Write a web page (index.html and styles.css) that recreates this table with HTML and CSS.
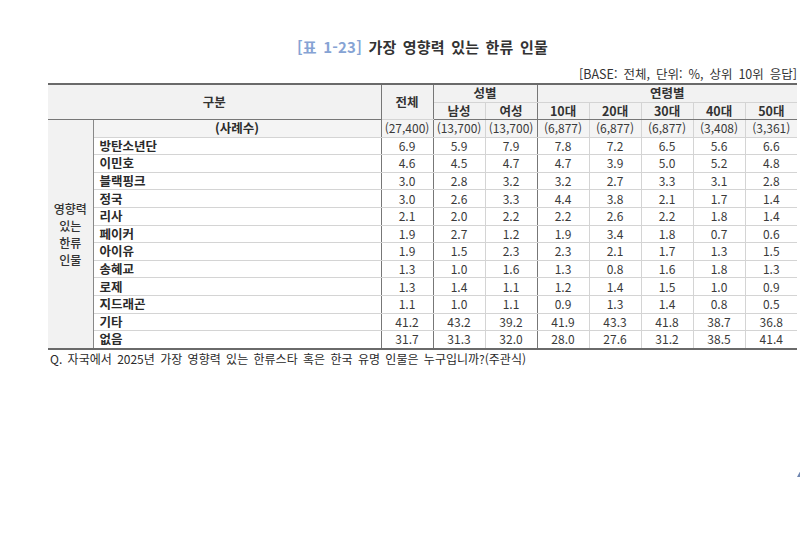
FILE: index.html
```html
<!DOCTYPE html>
<html lang="ko">
<head>
<meta charset="utf-8">
<link rel="stylesheet" href="styles.css">
</head>
<body>
<div class="page">
  <h1 class="title"><span class="tag">[표 1-23]</span> 가장 영향력 있는 한류 인물</h1>
  <div class="base">[BASE: 전체, 단위: %, 상위 10위 응답]</div>
  <table class="tbl">
    <colgroup>
      <col class="c-cat"><col class="c-label">
      <col class="c-num"><col class="c-num"><col class="c-num"><col class="c-num"><col class="c-num"><col class="c-num"><col class="c-num"><col class="c-num">
    </colgroup>
    <thead>
      <tr class="h1">
        <th colspan="2" rowspan="2" class="gubun thick-r">구분</th>
        <th rowspan="2" class="thick-r">전체</th>
        <th colspan="2" class="thick-r">성별</th>
        <th colspan="5">연령별</th>
      </tr>
      <tr class="h2">
        <th>남성</th><th class="thick-r">여성</th>
        <th>10대</th><th>20대</th><th>30대</th><th>40대</th><th>50대</th>
      </tr>
    </thead>
    <tbody>
      <tr class="cases">
        <td rowspan="13" class="cat">영향력<br>있는<br>한류<br>인물</td>
        <td class="label center thick-r">(사례수)</td>
        <td class="thick-r">(27,400)</td><td>(13,700)</td><td class="thick-r">(13,700)</td>
        <td>(6,877)</td><td>(6,877)</td><td>(6,877)</td><td>(3,408)</td><td>(3,361)</td>
      </tr>
      <tr><td class="label thick-r">방탄소년단</td><td class="thick-r">6.9</td><td>5.9</td><td class="thick-r">7.9</td><td>7.8</td><td>7.2</td><td>6.5</td><td>5.6</td><td>6.6</td></tr>
      <tr><td class="label thick-r">이민호</td><td class="thick-r">4.6</td><td>4.5</td><td class="thick-r">4.7</td><td>4.7</td><td>3.9</td><td>5.0</td><td>5.2</td><td>4.8</td></tr>
      <tr><td class="label thick-r">블랙핑크</td><td class="thick-r">3.0</td><td>2.8</td><td class="thick-r">3.2</td><td>3.2</td><td>2.7</td><td>3.3</td><td>3.1</td><td>2.8</td></tr>
      <tr><td class="label thick-r">정국</td><td class="thick-r">3.0</td><td>2.6</td><td class="thick-r">3.3</td><td>4.4</td><td>3.8</td><td>2.1</td><td>1.7</td><td>1.4</td></tr>
      <tr><td class="label thick-r">리사</td><td class="thick-r">2.1</td><td>2.0</td><td class="thick-r">2.2</td><td>2.2</td><td>2.6</td><td>2.2</td><td>1.8</td><td>1.4</td></tr>
      <tr><td class="label thick-r">페이커</td><td class="thick-r">1.9</td><td>2.7</td><td class="thick-r">1.2</td><td>1.9</td><td>3.4</td><td>1.8</td><td>0.7</td><td>0.6</td></tr>
      <tr><td class="label thick-r">아이유</td><td class="thick-r">1.9</td><td>1.5</td><td class="thick-r">2.3</td><td>2.3</td><td>2.1</td><td>1.7</td><td>1.3</td><td>1.5</td></tr>
      <tr><td class="label thick-r">송혜교</td><td class="thick-r">1.3</td><td>1.0</td><td class="thick-r">1.6</td><td>1.3</td><td>0.8</td><td>1.6</td><td>1.8</td><td>1.3</td></tr>
      <tr><td class="label thick-r">로제</td><td class="thick-r">1.3</td><td>1.4</td><td class="thick-r">1.1</td><td>1.2</td><td>1.4</td><td>1.5</td><td>1.0</td><td>0.9</td></tr>
      <tr><td class="label thick-r">지드래곤</td><td class="thick-r">1.1</td><td>1.0</td><td class="thick-r">1.1</td><td>0.9</td><td>1.3</td><td>1.4</td><td>0.8</td><td>0.5</td></tr>
      <tr><td class="label thick-r">기타</td><td class="thick-r">41.2</td><td>43.2</td><td class="thick-r">39.2</td><td>41.9</td><td>43.3</td><td>41.8</td><td>38.7</td><td>36.8</td></tr>
      <tr class="last"><td class="label thick-r">없음</td><td class="thick-r">31.7</td><td>31.3</td><td class="thick-r">32.0</td><td>28.0</td><td>27.6</td><td>31.2</td><td>38.5</td><td>41.4</td></tr>
    </tbody>
  </table>
  <p class="note">Q. 자국에서 2025년 가장 영향력 있는 한류스타 혹은 한국 유명 인물은 누구입니까?(주관식)</p>
  <span class="corner"></span>
</div>
</body>
</html>
```

FILE: styles.css
```css
html, body {
  margin: 0;
  padding: 0;
  background: #ffffff;
}
body {
  font-family: "Noto Sans CJK KR", "Noto Sans", sans-serif;
  color: #2a2a2a;
}
.page {
  position: relative;
  width: 800px;
  height: 534px;
  padding: 36px 0 0 48px;
  box-sizing: border-box;
  overflow: hidden;
}
.title {
  width: 749px;
  margin: 0;
  text-align: center;
  font-size: 15px;
  line-height: 22px;
  font-weight: 700;
  color: #333;
  letter-spacing: 0.2px;
  word-spacing: 2px;
}
.title .tag {
  color: #86a3d4;
}
.base {
  width: 749px;
  margin-top: 8px;
  text-align: right;
  font-size: 12.5px;
  line-height: 16px;
  color: #333;
  word-spacing: 2.5px;
}
.tbl {
  width: 749px;
  border-collapse: collapse;
  table-layout: fixed;
  font-size: 12px;
  margin-top: 1px;
  border-top: 2px solid #6a6a6a;
  border-bottom: 2px solid #6a6a6a;
}
.c-cat { width: 45px; }
.c-label { width: 288px; }
.c-num { width: 52px; }
.tbl th, .tbl td {
  padding: 0;
  text-align: center;
  border: 1px solid #d4d4d4;
  height: 16.6px;
  line-height: 16px;
  white-space: nowrap;
  overflow: hidden;
}
.tbl tr > *:last-child {
  border-right: none;
}
.tbl thead th {
  background: #f2f2f2;
  font-weight: 700;
  color: #333;
  font-size: 12.5px;
}
.tbl thead tr.h1 th { height: 16.5px; }
.tbl thead tr.h2 th { height: 16.5px; border-bottom: 1px solid #777; }
.tbl thead th.gubun {
  border-left: none;
  border-bottom: 1px solid #777;
}
.tbl .thick-r {
  border-right: 1px solid #777;
}
.tbl td.cat {
  background: #f2f2f2;
  border-left: none;
  border-right: 1px solid #888;
  font-weight: 500;
  color: #333;
  line-height: 17px;
  vertical-align: middle;
}
.tbl tr.cases td {
  background: #f4f4f4;
}
.tbl tr.cases td.cat {
  background: #f2f2f2;
}
.tbl td.label {
  text-align: left;
  padding-left: 6px;
  font-weight: 700;
  color: #2a2a2a;
  font-size: 12.5px;
}
.tbl td.label.center {
  text-align: center;
  padding-left: 0;
}
.tbl td {
  color: #3a3a3a;
}
.note {
  margin: 1px 0 0 2px;
  font-size: 12px;
  line-height: 16px;
  color: #2a2a2a;
  word-spacing: 2px;
}
.corner {
  position: absolute;
  right: -2px;
  top: 468px;
  width: 0;
  height: 0;
  border-left: 5px solid transparent;
  border-bottom: 9px solid #6f86b0;
}
```
